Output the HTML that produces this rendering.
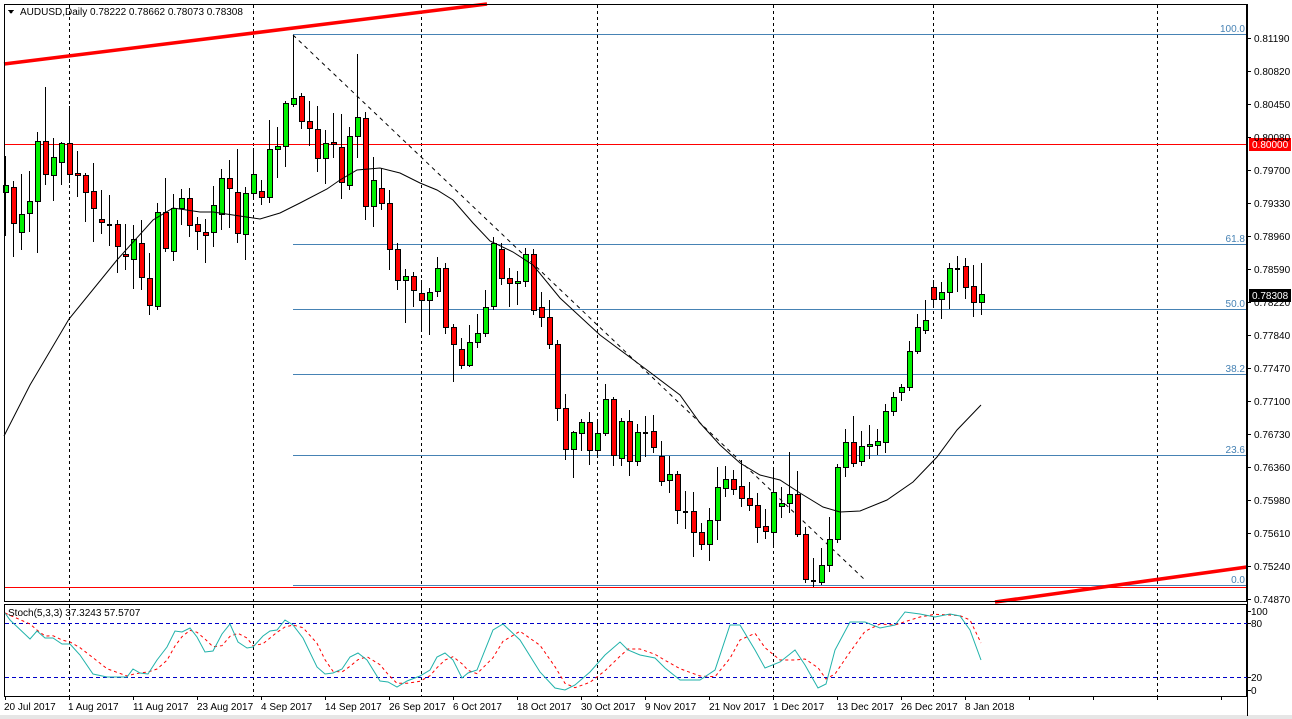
<!DOCTYPE html><html><head><meta charset="utf-8"><style>
html,body{margin:0;padding:0;background:#fff;width:1292px;height:719px;overflow:hidden}
svg{position:absolute;left:0;top:0}
text{font-family:"Liberation Sans",sans-serif;font-size:10px;fill:#000}
</style></head><body>
<svg id="s" width="1292" height="719" xmlns="http://www.w3.org/2000/svg" shape-rendering="crispEdges">
<rect x="0" y="0" width="1292" height="719" fill="#fff"/>
<rect x="0" y="715" width="1292" height="4" fill="#e6e6e6"/>
<g id="grid" stroke="#000" stroke-dasharray="3,3" stroke-width="1"></g>
<g stroke="#4682b4" stroke-width="1">
<line x1="293" y1="34.5" x2="1247" y2="34.5"/>
<line x1="293" y1="244.5" x2="1247" y2="244.5"/>
<line x1="293" y1="309.5" x2="1247" y2="309.5"/>
<line x1="293" y1="374.5" x2="1247" y2="374.5"/>
<line x1="293" y1="455.5" x2="1247" y2="455.5"/>
<line x1="293" y1="585.5" x2="1247" y2="585.5"/>
</g>
<g style="font-size:10px" text-anchor="end">
<text x="1245" y="32" style="fill:#4682b4">100.0</text>
<text x="1245" y="242" style="fill:#4682b4">61.8</text>
<text x="1245" y="307" style="fill:#4682b4">50.0</text>
<text x="1245" y="372" style="fill:#4682b4">38.2</text>
<text x="1245" y="453" style="fill:#4682b4">23.6</text>
<text x="1245" y="583" style="fill:#4682b4">0.0</text>
</g>
<line x1="4" y1="144.5" x2="1247" y2="144.5" stroke="#f00"/>
<line x1="4" y1="587.5" x2="1247" y2="587.5" stroke="#f00"/>
<line x1="293" y1="35" x2="865" y2="580" stroke="#000" stroke-dasharray="4,4" shape-rendering="auto"/>
<g id="candles"></g>
<polyline id="ma" fill="none" stroke="#000" stroke-width="1" shape-rendering="auto"/>
<line x1="4" y1="64" x2="487" y2="4" stroke="#f00" stroke-width="3.5" shape-rendering="auto"/>
<line x1="995" y1="602" x2="1247" y2="567" stroke="#f00" stroke-width="3.5" shape-rendering="auto"/>
<rect x="4.5" y="4.5" width="1242" height="597" fill="none" stroke="#000"/>
<rect x="4.5" y="604.5" width="1242" height="92" fill="none" stroke="#000"/>
<rect x="1247" y="600" width="45" height="6" fill="#fff"/>
<rect x="1247" y="4" width="1" height="712" fill="#000"/>
<line x1="5" y1="623.5" x2="1247" y2="623.5" stroke="#0000c8" stroke-dasharray="4,3"/>
<line x1="5" y1="677.5" x2="1247" y2="677.5" stroke="#0000c8" stroke-dasharray="4,3"/>
<polyline id="sig" fill="none" stroke="#f00" stroke-dasharray="3,3" shape-rendering="auto"/>
<polyline id="stk" fill="none" stroke="#20b2aa" shape-rendering="auto"/>
<text x="8" y="616">Stoch(5,3,3) 37.3243 57.5707</text>
<g id="ticks" stroke="#000"></g>
<rect x="1249" y="138" width="42" height="13" fill="#f00"/>
<text x="1252" y="148" style="fill:#fff">0.80000</text>
<rect x="1249" y="289" width="42" height="13" fill="#000"/>
<text x="1252" y="299" style="fill:#fff">0.78308</text>
<text x="1251" y="615">100</text><text x="1251" y="627">80</text><text x="1251" y="681">20</text><text x="1251" y="694">0</text>
<polygon points="8,10 14,10 11,14" fill="#000"/>
<text x="20" y="15">AUDUSD,Daily  0.78222 0.78662 0.78073 0.78308</text>
<g style="font-size:10px">
<text x="4" y="710">20 Jul 2017</text><text x="68" y="710">1 Aug 2017</text><text x="133" y="710">11 Aug 2017</text><text x="197" y="710">23 Aug 2017</text><text x="261" y="710">4 Sep 2017</text><text x="325" y="710">14 Sep 2017</text><text x="389" y="710">26 Sep 2017</text><text x="453" y="710">6 Oct 2017</text><text x="517" y="710">18 Oct 2017</text><text x="581" y="710">30 Oct 2017</text><text x="645" y="710">9 Nov 2017</text><text x="709" y="710">21 Nov 2017</text><text x="773" y="710">1 Dec 2017</text><text x="837" y="710">13 Dec 2017</text><text x="901" y="710">26 Dec 2017</text><text x="965" y="710">8 Jan 2018</text>
</g>
<g id="rl">
<text x="1254" y="42">0.81190</text><text x="1254" y="75">0.80820</text><text x="1254" y="108">0.80450</text><text x="1254" y="141">0.80080</text><text x="1254" y="174">0.79700</text><text x="1254" y="207">0.79330</text><text x="1254" y="240">0.78960</text><text x="1254" y="273">0.78590</text><text x="1254" y="306">0.78220</text><text x="1254" y="339">0.77840</text><text x="1254" y="372">0.77470</text><text x="1254" y="405">0.77100</text><text x="1254" y="438">0.76730</text><text x="1254" y="471">0.76360</text><text x="1254" y="504">0.75980</text><text x="1254" y="537">0.75610</text><text x="1254" y="570">0.75240</text><text x="1254" y="603">0.74870</text>
</g>
</svg>
<script>
var NS="http://www.w3.org/2000/svg";
function el(t,a,p){var e=document.createElementNS(NS,t);for(var k in a)e.setAttribute(k,a[k]);p.appendChild(e);return e;}
var g=document.getElementById('grid');
[69,253,421,597,773,933,1157].forEach(function(x){el('line',{x1:x+.5,y1:5,x2:x+.5,y2:696},g);});
var tk=document.getElementById('ticks');
[38,71,104,137,170,203,236,269,302,335,368,401,434,467,500,533,566,599].forEach(function(y){el('line',{x1:1247,y1:y+.5,x2:1251,y2:y+.5},tk);});
[611,623,677,690].forEach(function(y){el('line',{x1:1247,y1:y+.5,x2:1251,y2:y+.5},tk);});
for(var x=5;x<1247;x+=64){el('line',{x1:x+.5,y1:696,x2:x+.5,y2:700},tk);}
var C=[
[5,192,185,156,236],[13,187,223,181,257],[21,232,214,174,250],[29,213,201,171,232],[37,201,141,132,253],[45,141,174,87,185],[53,175,157,138,201],[61,162,143,142,185],[69,143,174,106,183],[77,173,175,151,197],[85,175,192,173,222],[93,191,208,163,242],[101,219,222,190,234],[109,224,224,195,246],[117,224,246,220,273],[125,254,256,224,270],[133,259,239,225,289],[141,243,277,220,290],[149,278,305,253,315],[157,306,212,203,310],[165,212,248,178,252],[173,251,208,194,261],[181,208,198,189,225],[189,198,225,188,237],[197,224,231,217,250],[205,232,235,219,263],[213,232,205,186,247],[221,214,178,169,230],[229,178,188,160,228],[237,192,233,149,243],[245,234,193,187,260],[253,193,174,148,200],[261,191,197,180,205],[269,197,149,120,203],[277,149,146,127,178],[285,146,103,101,167],[293,104,98,35,107],[301,96,121,93,129],[309,121,128,101,146],[317,129,158,106,172],[325,158,143,130,184],[333,142,144,113,158],[341,147,182,114,199],[349,185,136,127,190],[357,136,117,54,158],[365,118,206,112,220],[373,206,180,157,227],[381,188,203,168,210],[389,203,249,190,270],[397,249,280,243,290],[405,280,276,269,323],[413,276,290,272,307],[421,293,300,280,330],[429,300,292,288,335],[437,291,268,257,297],[445,268,327,263,334],[453,327,344,324,382],[461,349,365,338,369],[469,365,342,325,367],[477,342,333,314,348],[485,333,307,290,337],[493,306,243,237,310],[501,249,278,243,285],[509,278,283,268,307],[517,283,281,271,305],[525,281,254,248,287],[533,254,310,249,315],[541,307,317,292,327],[549,317,344,300,349],[557,344,408,340,421],[565,408,449,394,460],[573,449,432,431,478],[581,433,422,419,451],[589,422,450,412,465],[597,450,433,419,458],[605,433,399,384,436],[613,399,455,397,466],[621,458,421,418,466],[629,421,461,410,476],[637,461,432,424,466],[645,432,432,416,457],[653,431,447,415,453],[661,456,481,441,486],[669,480,474,456,493],[677,474,510,471,524],[685,511,511,491,529],[693,511,532,492,557],[701,532,544,523,550],[709,544,520,508,561],[717,520,487,467,540],[725,488,479,466,497],[733,479,489,470,495],[741,486,498,460,507],[749,498,505,482,511],[757,505,527,493,543],[765,526,531,509,539],[773,532,492,467,547],[781,506,503,487,518],[789,503,494,452,513],[797,494,534,471,537],[805,534,579,527,583],[813,580,580,558,587],[821,582,565,548,585],[829,565,539,517,572],[837,539,467,464,543],[845,467,442,429,477],[853,442,463,416,467],[861,461,446,431,466],[869,446,444,425,459],[877,445,441,429,455],[885,442,411,404,453],[893,411,397,392,416],[901,392,387,384,401],[909,387,351,341,391],[917,351,327,314,354],[925,330,320,300,334],[933,287,299,280,305],[941,299,292,282,319],[949,292,268,263,309],[957,268,268,256,292],[965,266,287,258,299],[973,286,302,265,317],[981,302,294,263,315]];
var cg=document.getElementById('candles');
C.forEach(function(c){var x=c[0],o=c[1],cl=c[2],h=c[3],l=c[4];
el('line',{x1:x+.5,y1:h,x2:x+.5,y2:l,stroke:'#000'},cg);
var t=Math.min(o,cl),b=Math.max(o,cl);
if(b-t<1){el('rect',{x:x-2,y:t,width:5,height:2,fill:'#000'},cg);}
else el('rect',{x:x-2+.5,y:t+.5,width:5,height:b-t,fill:(cl<o?'#00f000':'#f00'),stroke:'#000'},cg);
});
document.getElementById('ma').setAttribute('points',"4,436 30,385 69,319 117,260 153,220 173,208 200,212 213,212 233,215 260,219 280,213 300,203 327,189 340,180 357,170 380,168 400,173 420,183 437,190 453,200 473,223 490,241 513,252 533,265 560,298 600,335 647,370 680,395 700,423 720,445 740,463 760,475 780,480 800,493 823,507 840,512 860,511 887,500 913,482 937,457 957,430 981,405");
var S=[[5,613],[10,620],[30,639],[37,631],[45,638],[53,638],[62,644],[70,644],[80,655],[93,674],[107,677],[127,677],[133,669],[140,673],[148,674],[157,660],[167,647],[175,631],[182,632],[190,628],[197,637],[205,652],[213,651],[222,634],[230,624],[238,642],[247,648],[253,647],[263,636],[270,631],[277,630],[285,620],[293,625],[303,638],[317,667],[325,674],[333,673],[342,669],[350,657],[358,653],[367,660],[380,681],[388,682],[397,687],[407,681],[420,676],[430,670],[437,657],[445,653],[453,660],[462,678],[468,673],[477,670],[493,630],[503,624],[520,640],[540,672],[555,688],[565,690],[575,685],[590,672],[605,655],[620,642],[628,650],[640,655],[655,658],[665,668],[680,680],[700,680],[715,670],[730,625],[740,625],[755,650],[765,668],[780,662],[795,650],[805,665],[818,688],[826,684],[835,650],[850,622],[865,622],[880,628],[895,625],[905,612],[920,614],[935,617],[950,614],[960,616],[970,630],[981,660]];
document.getElementById('stk').setAttribute('points',S.map(function(p){return p.join(',')}).join(' '));
var sig=[];for(var i=0;i<S.length;i++){var a=S[Math.max(0,i-2)][1],b=S[Math.max(0,i-1)][1],c=S[i][1];sig.push([S[i][0],(a+b+c)/3]);}
sig[sig.length-1][1]=643;
document.getElementById('sig').setAttribute('points',sig.map(function(p){return p[0]+','+p[1].toFixed(1)}).join(' '));
</script>
</body></html>
